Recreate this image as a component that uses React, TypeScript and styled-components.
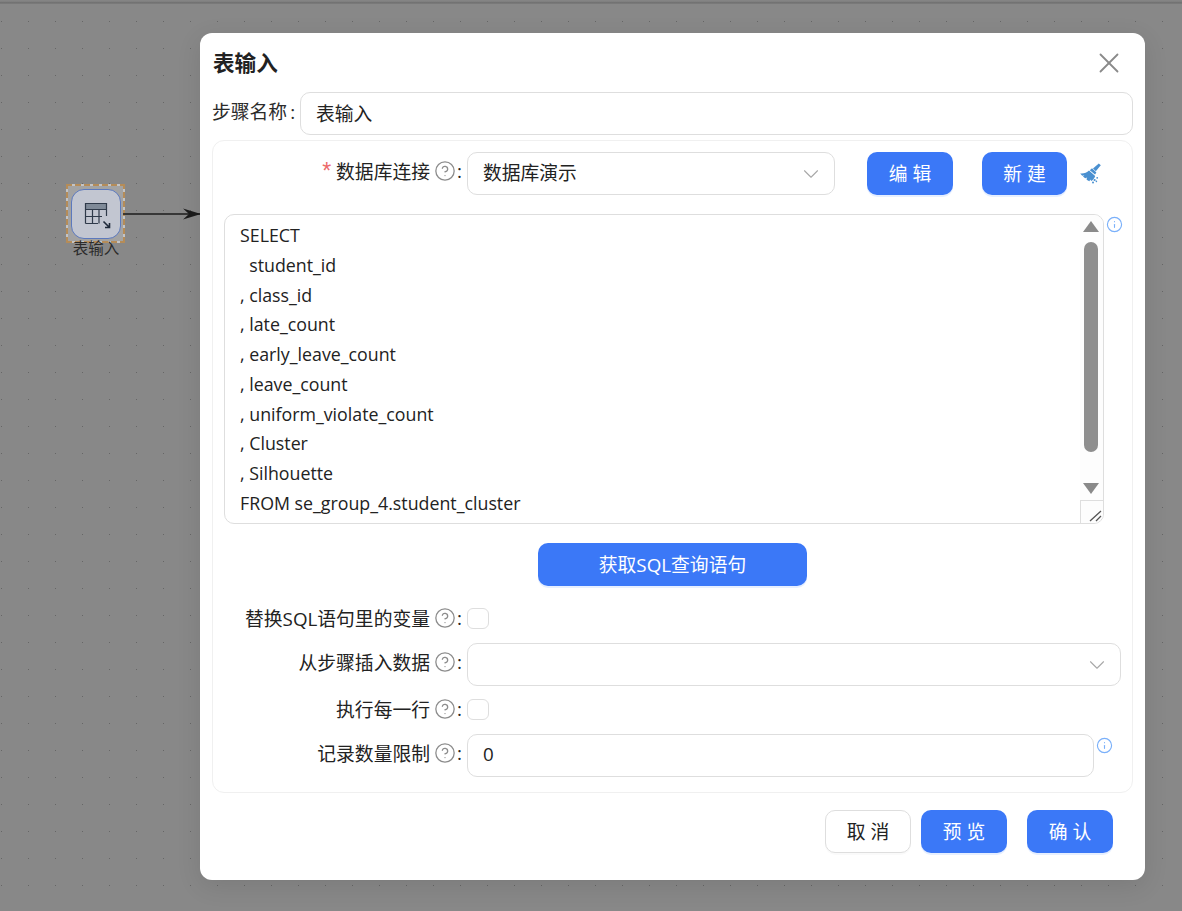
import React from 'react'
import styled, { createGlobalStyle } from 'styled-components'
import { ChevronDown, CircleHelp, Info, X } from 'lucide-react'

const sqlLines = [
  'SELECT',
  '  student_id',
  ', class_id',
  ', late_count',
  ', early_leave_count',
  ', leave_count',
  ', uniform_violate_count',
  ', Cluster',
  ', Silhouette',
  'FROM se_group_4.student_cluster',
]

const Hint: React.FC = () => (
  <HintIcon>
    <CircleHelp size={22} strokeWidth={1.4} />
  </HintIcon>
)

const FieldLabel: React.FC<{ text: string; required?: boolean }> = ({ text, required }) => (
  <Label>
    {required ? <Star>*</Star> : null}
    {text}
    <Hint />
    <Colon>:</Colon>
  </Label>
)

const TableNodeIcon: React.FC = () => (
  <svg width="30" height="30" viewBox="0 0 30 30" fill="none">
    <rect x="4" y="5" width="21" height="5" fill="#7f8a98" />
    <path d="M4.5 24.5V4.5H25.5V17M4.5 10.5H25.5M4.5 17.5H21M4.5 24.5H17M11.5 10.5V24.5M18 10.5V24.5" stroke="#2f3a4a" strokeWidth="1.2" />
    <path d="M22.5 22.5L28.5 28.5M28.5 24V28.5H24" stroke="#1f2a3a" strokeWidth="1.6" />
  </svg>
)

const BroomDrawing: React.FC = () => (
  <svg width="21" height="21" viewBox="0 0 21 21" fill="currentColor">
    <path d="M18.8 0.4L20.8 2.2L15.8 8.2L13 5.6Z" />
    <path d="M12 5.2L16.4 9.4L15 11.6L9.8 7.2Z" />
    <path d="M9 7.6L15.2 13C14.6 15 13.2 16.8 11.4 18L10 16.4L9.6 18.2C8.2 17.8 7.2 17 6.4 16.2L7.2 14.4L5.2 15.3L3 13.6L4.4 12.3L2.2 12.8L0.2 10.4C3.6 10.8 6.8 9.8 9 7.6Z" />
    <circle cx="14.6" cy="17" r="1.1" />
    <circle cx="17.2" cy="14.8" r="0.9" />
    <circle cx="13" cy="19.6" r="1" />
    <circle cx="16.4" cy="18.4" r="0.8" />
  </svg>
)

const App: React.FC = () => {
  return (
    <Canvas>
      <GlobalStyle />
      <TopEdge />

      <Node>
        <NodeFrame>
          <NodeBox>
            <TableNodeIcon />
          </NodeBox>
        </NodeFrame>
        <NodeTitle>表输入</NodeTitle>
      </Node>
      <Edge width="90" height="14" viewBox="0 0 90 14">
        <path d="M0 7H78" stroke="#1c1c1c" strokeWidth="1.3" />
        <path d="M60 1.5L78 7L60 12.5L66 7Z" fill="#1c1c1c" />
      </Edge>

      <Modal>
        <ModalHeader>
          <ModalTitle>表输入</ModalTitle>
          <CloseButton>
            <X size={34} strokeWidth={1.3} />
          </CloseButton>
        </ModalHeader>

        <NameRow>
          <NameLabel>
            步骤名称<NameColon>:</NameColon>
          </NameLabel>
          <TextInput $grow>表输入</TextInput>
        </NameRow>

        <Section>
          <FormRow>
            <FieldLabel text="数据库连接" required />
            <SelectBox $width={368}>
              数据库演示
              <Chevron>
                <ChevronDown size={26} strokeWidth={1} />
              </Chevron>
            </SelectBox>
            <PrimaryButton $width={86} $ml={32}>编 辑</PrimaryButton>
            <PrimaryButton $width={85} $ml={29}>新 建</PrimaryButton>
            <BroomIcon>
              <BroomDrawing />
            </BroomIcon>
          </FormRow>

          <EditorRow>
            <Editor>
              <EditorText>
                {sqlLines.map((line) => (
                  <SqlLine key={line}>{line}</SqlLine>
                ))}
              </EditorText>
              <ScrollBar>
                <ScrollTrack>
                  <ArrowUp />
                  <Thumb />
                  <ArrowDown />
                </ScrollTrack>
                <Resizer>
                  <svg width="14" height="14" viewBox="0 0 14 14" fill="none">
                    <path d="M2 13L13 3M8 13L13 8" stroke="#555" strokeWidth="1.3" />
                  </svg>
                </Resizer>
              </ScrollBar>
            </Editor>
            <InfoIcon $mt={1.5}>
              <Info size={17} strokeWidth={1.6} />
            </InfoIcon>
          </EditorRow>

          <QueryRow>
            <PrimaryButton $width={269}>获取SQL查询语句</PrimaryButton>
          </QueryRow>

          <CheckRow $mt={22}>
            <FieldLabel text="替换SQL语句里的变量" />
            <CheckBox />
          </CheckRow>
          <FormRow $mt={14}>
            <FieldLabel text="从步骤插入数据" />
            <SelectBox $width={654}>
              <Chevron>
                <ChevronDown size={26} strokeWidth={1} />
              </Chevron>
            </SelectBox>
          </FormRow>
          <CheckRow $mt={13}>
            <FieldLabel text="执行每一行" />
            <CheckBox />
          </CheckRow>
          <LimitRow>
            <FieldLabel text="记录数量限制" />
            <LimitInput>0</LimitInput>
            <InfoIcon $mt={2.5}>
              <Info size={17} strokeWidth={1.6} />
            </InfoIcon>
          </LimitRow>
        </Section>

        <ModalFooter>
          <DefaultButton>取 消</DefaultButton>
          <PrimaryButton $width={86} $ml={10}>预 览</PrimaryButton>
          <PrimaryButton $width={86} $ml={20}>确 认</PrimaryButton>
        </ModalFooter>
      </Modal>
    </Canvas>
  )
}

const GlobalStyle = createGlobalStyle`
  html, body {
    margin: 0;
    padding: 0;
    height: 100%;
    overflow: hidden;
  }
  body {
    font-family: "Open Sans", "Noto Sans CJK SC", sans-serif;
    color: #222;
  }
  * {
    box-sizing: border-box;
  }
`

const Canvas = styled.div`
  position: relative;
  width: 1182px;
  height: 911px;
  overflow: hidden;
  background-color: #888888;
  background-image: radial-gradient(circle at 1.5px 1.5px, #666 0.6px, transparent 1px);
  background-size: 27px 27px;
  background-position: 0 20px;
`

const TopEdge = styled.div`
  height: 4px;
  background: linear-gradient(#848484 0, #848484 30%, #727272 60%, #7c7c7c 100%);
`

const Node = styled.div`
  position: absolute;
  left: 66px;
  top: 184px;
  width: 60px;
`

const NodeFrame = styled.div`
  width: 59px;
  height: 59px;
  padding: 5px;
  background-color: #a3a3a3;
  background-image:
    repeating-linear-gradient(90deg, #b58c58 0 6px, #c4c4c4 6px 9px),
    repeating-linear-gradient(90deg, #b58c58 0 6px, #c4c4c4 6px 9px),
    repeating-linear-gradient(0deg, #b58c58 0 6px, #c4c4c4 6px 9px),
    repeating-linear-gradient(0deg, #b58c58 0 6px, #c4c4c4 6px 9px);
  background-size: 100% 2px, 100% 2px, 2px 100%, 2px 100%;
  background-position: 0 0, 0 100%, 0 0, 100% 0;
  background-repeat: no-repeat;
`

const NodeBox = styled.div`
  width: 50px;
  height: 50px;
  margin: -0.5px;
  display: flex;
  align-items: center;
  justify-content: center;
  border: 1.5px solid #5c79bd;
  border-radius: 13px;
  background: #c2c6d1;
`

const NodeTitle = styled.div`
  margin-top: -5px;
  text-align: center;
  font-size: 15.5px;
  line-height: 20px;
  color: #2b2b2b;
  white-space: nowrap;
`

const Edge = styled.svg`
  position: absolute;
  left: 123px;
  top: 207px;
`

const Modal = styled.div`
  position: absolute;
  left: 200px;
  top: 33px;
  width: 945px;
  height: 847px;
  padding: 0 12px;
  background: #fff;
  border-radius: 12px;
  box-shadow: 0 6px 24px rgba(0, 0, 0, 0.1);
`

const ModalHeader = styled.div`
  height: 59px;
  display: flex;
  align-items: center;
  justify-content: space-between;
  padding-left: 1px;
`

const ModalTitle = styled.div`
  font-size: 21.6px;
  font-weight: 700;
  color: #222;
  padding-bottom: 2px;
`

const CloseButton = styled.div`
  display: flex;
  color: #8a8a8a;
  margin-right: 7px;
`

const NameRow = styled.div`
  display: flex;
  align-items: center;
`

const NameLabel = styled.div`
  width: 88px;
  flex: none;
  font-size: 18.8px;
  color: #2b2b2b;
  padding-bottom: 6px;
  white-space: nowrap;
`

const NameColon = styled.span`
  margin-left: 3px;
`

const TextInput = styled.div<{ $grow?: boolean }>`
  height: 43px;
  flex: ${(props) => (props.$grow ? 1 : 'none')};
  display: flex;
  align-items: center;
  padding: 0 15px 2px;
  border: 1px solid #dedede;
  border-radius: 10px;
  background: #fff;
  font-size: 18.8px;
  color: #222;
`

const LimitInput = styled(TextInput)`
  width: 627px;
  margin-left: 3px;
  padding-bottom: 3px;
`

const Section = styled.div`
  margin-top: 5px;
  height: 653px;
  padding: 11px 11px 0 11px;
  border: 1px solid #f0f0f0;
  border-radius: 12px;
`

const FormRow = styled.div<{ $mt?: number }>`
  display: flex;
  align-items: center;
  margin-top: ${(props) => props.$mt || 0}px;
`

const CheckRow = styled(FormRow)`
  height: 21px;
  & > div:first-child {
    padding-bottom: 1px;
  }
`

const LimitRow = styled.div`
  display: flex;
  align-items: flex-start;
  margin-top: 14px;
  height: 43px;
`

const Label = styled.div`
  width: 240px;
  flex: none;
  align-self: center;
  display: flex;
  align-items: center;
  justify-content: flex-end;
  padding-bottom: 5px;
  font-size: 18.8px;
  color: #222;
  white-space: nowrap;
`

const Star = styled.span`
  color: #ec6a6a;
  margin-right: 5px;
  font-family: "Liberation Sans", sans-serif;
  font-size: 23px;
  line-height: 20px;
`

const HintIcon = styled.span`
  display: flex;
  margin-left: 4px;
  color: #8c8c8c;
`

const Colon = styled.span`
  width: 7px;
  margin-left: 1px;
  text-align: left;
`

const SelectBox = styled.div<{ $width: number }>`
  position: relative;
  width: ${(props) => props.$width}px;
  height: 43px;
  margin-left: 3px;
  flex: none;
  display: flex;
  align-items: center;
  padding: 0 15px 3px;
  border: 1px solid #dedede;
  border-radius: 10px;
  background: #fff;
  font-size: 18.8px;
  color: #222;
`

const Chevron = styled.span`
  position: absolute;
  right: 10px;
  top: 8px;
  display: flex;
  color: #a8a8a8;
`

const PrimaryButton = styled.div<{ $width: number; $ml?: number }>`
  width: ${(props) => props.$width}px;
  height: 43px;
  margin-left: ${(props) => props.$ml || 0}px;
  padding-bottom: 2px;
  flex: none;
  display: flex;
  align-items: center;
  justify-content: center;
  background: #3b78f7;
  border-radius: 10px;
  box-shadow: 0 2px 0 rgba(5, 95, 255, 0.1);
  color: #fff;
  font-size: 18.8px;
  white-space: pre;
`

const DefaultButton = styled.div`
  width: 86px;
  height: 43px;
  padding-bottom: 2px;
  flex: none;
  display: flex;
  align-items: center;
  justify-content: center;
  background: #fff;
  border: 1px solid #dedede;
  border-radius: 10px;
  box-shadow: 0 2px 0 rgba(0, 0, 0, 0.02);
  color: #222;
  font-size: 18.8px;
  white-space: pre;
`

const BroomIcon = styled.span`
  display: flex;
  margin-left: 13px;
  color: #4a90d0;
`

const EditorRow = styled.div`
  display: flex;
  align-items: flex-start;
  margin-top: 19px;
`

const Editor = styled.div`
  width: 880px;
  height: 310px;
  flex: none;
  display: flex;
  border: 1px solid #dedede;
  border-radius: 10px;
  overflow: hidden;
  background: #fff;
`

const EditorText = styled.div`
  flex: 1;
  padding: 6.3px 15px;
`

const SqlLine = styled.div`
  font-size: 17.8px;
  line-height: 29.7px;
  color: #222;
  white-space: pre;
`

const ScrollBar = styled.div`
  width: 23px;
  flex: none;
  display: flex;
  flex-direction: column;
  background: #fdfdfd;
`

const ScrollTrack = styled.div`
  flex: 1;
  display: flex;
  flex-direction: column;
  align-items: center;
  padding-right: 2px;
`

const ArrowUp = styled.div`
  margin-top: 6px;
  width: 0;
  height: 0;
  border-left: 8px solid transparent;
  border-right: 8px solid transparent;
  border-bottom: 11px solid #8a8a8a;
`

const ArrowDown = styled.div`
  margin-top: 31px;
  width: 0;
  height: 0;
  border-left: 8px solid transparent;
  border-right: 8px solid transparent;
  border-top: 11px solid #8a8a8a;
`

const Thumb = styled.div`
  margin-top: 10px;
  width: 14px;
  height: 210px;
  border-radius: 7px;
  background: #8f8f8f;
`

const Resizer = styled.div`
  width: 23px;
  height: 23px;
  flex: none;
  display: flex;
  align-items: flex-end;
  justify-content: flex-end;
  padding: 0 1px 1px 0;
  border-top: 1px solid #dedede;
  border-left: 1px solid #dedede;
`

const InfoIcon = styled.span<{ $mt?: number }>`
  display: flex;
  flex: none;
  margin-top: ${(props) => props.$mt || 0}px;
  margin-left: 1.5px;
  color: #7ab0fa;
`

const QueryRow = styled.div`
  display: flex;
  justify-content: center;
  margin-top: 19px;
`

const CheckBox = styled.div`
  width: 22px;
  height: 21px;
  margin-left: 3px;
  flex: none;
  border: 1px solid #dedede;
  border-radius: 6px;
  background: #fff;
`

const ModalFooter = styled.div`
  display: flex;
  justify-content: flex-end;
  margin-top: 17px;
  padding-right: 20px;
`

export default App
